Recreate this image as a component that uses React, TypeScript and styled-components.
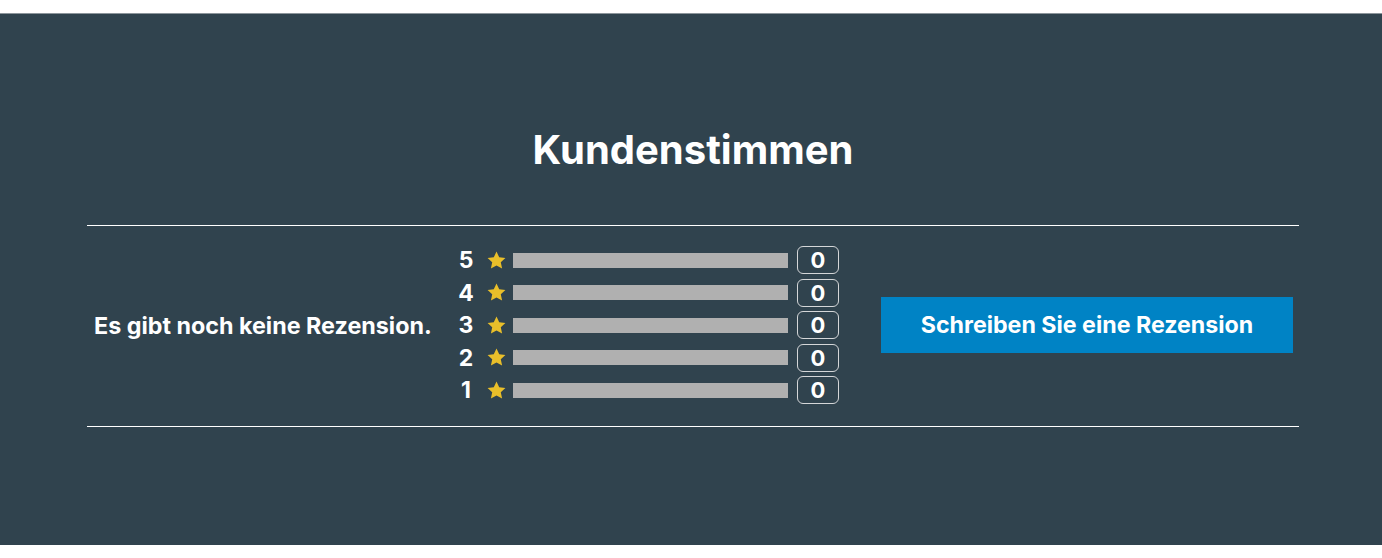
import React from "react";
import styled, { createGlobalStyle } from "styled-components";

const GlobalStyle = createGlobalStyle`
  html, body {
    margin: 0;
    padding: 0;
    background: #fff;
  }
  body {
    font-family: Inter, "Noto Sans", sans-serif;
  }
`;

const Page = styled.div`
  padding-top: 13px;
`;

const Section = styled.section`
  background-color: #30434e;
  height: 532px;
  box-sizing: border-box;
  padding: 112px 83px 0 87px;
  border-top: 1px solid #8c959b;
`;

const Title = styled.h2`
  margin: 0;
  font-size: 40px;
  line-height: 48px;
  font-weight: 700;
  color: #fff;
  text-align: center;
`;

const Summary = styled.div`
  margin-top: 51px;
  border-top: 1px solid #fff;
  border-bottom: 1px solid #fff;
  padding: 20px 6px 22px 7px;
  display: flex;
  align-items: center;
`;

const NoReviews = styled.div`
  width: 364px;
  font-size: 23.3px;
  font-weight: 700;
  color: #fff;
  white-space: nowrap;
`;

const Histogram = styled.div`
  width: 381px;
  display: flex;
  flex-direction: column;
  gap: 4.5px;
`;

const Row = styled.div`
  height: 28px;
  display: flex;
  align-items: center;
`;

const Level = styled.span`
  width: 16px;
  font-size: 23px;
  font-weight: 700;
  color: #fff;
  text-align: center;
`;

const Star = styled.svg`
  width: 21px;
  height: 21px;
  margin-left: 12px;
  margin-right: 6px;
  flex-shrink: 0;
`;

const Bar = styled.div`
  width: 275px;
  height: 15px;
  background-color: #b0b0b0;
`;

const Count = styled.span`
  margin-left: 9px;
  width: 42px;
  height: 28px;
  box-sizing: border-box;
  border: 1px solid #d4d6d8;
  border-radius: 6px;
  display: flex;
  align-items: center;
  justify-content: center;
  font-size: 22px;
  font-weight: 700;
  color: #fff;
`;

const WriteButton = styled.button`
  margin-left: auto;
  width: 412px;
  height: 56px;
  border: none;
  background-color: #0083c5;
  color: #fff;
  font-family: Inter, "Noto Sans", sans-serif;
  font-size: 23.2px;
  font-weight: 700;
  cursor: pointer;
`;

const StarIcon = () => (
  <Star viewBox="0 0 24 24">
    <path
      d="M12 1.8l3.1 6.6 7.1.8-5.3 4.9 1.5 7.1L12 17.6l-6.4 3.6 1.5-7.1-5.3-4.9 7.1-.8z"
      fill="#e9bf2a"
    />
  </Star>
);

const levels = [5, 4, 3, 2, 1];

export default function App() {
  return (
    <>
      <GlobalStyle />
      <Page>
        <Section>
          <Title>Kundenstimmen</Title>
          <Summary>
            <NoReviews>Es gibt noch keine Rezension.</NoReviews>
            <Histogram>
              {levels.map((level) => (
                <Row key={level}>
                  <Level>{level}</Level>
                  <StarIcon />
                  <Bar />
                  <Count>0</Count>
                </Row>
              ))}
            </Histogram>
            <WriteButton>Schreiben Sie eine Rezension</WriteButton>
          </Summary>
        </Section>
      </Page>
    </>
  );
}
